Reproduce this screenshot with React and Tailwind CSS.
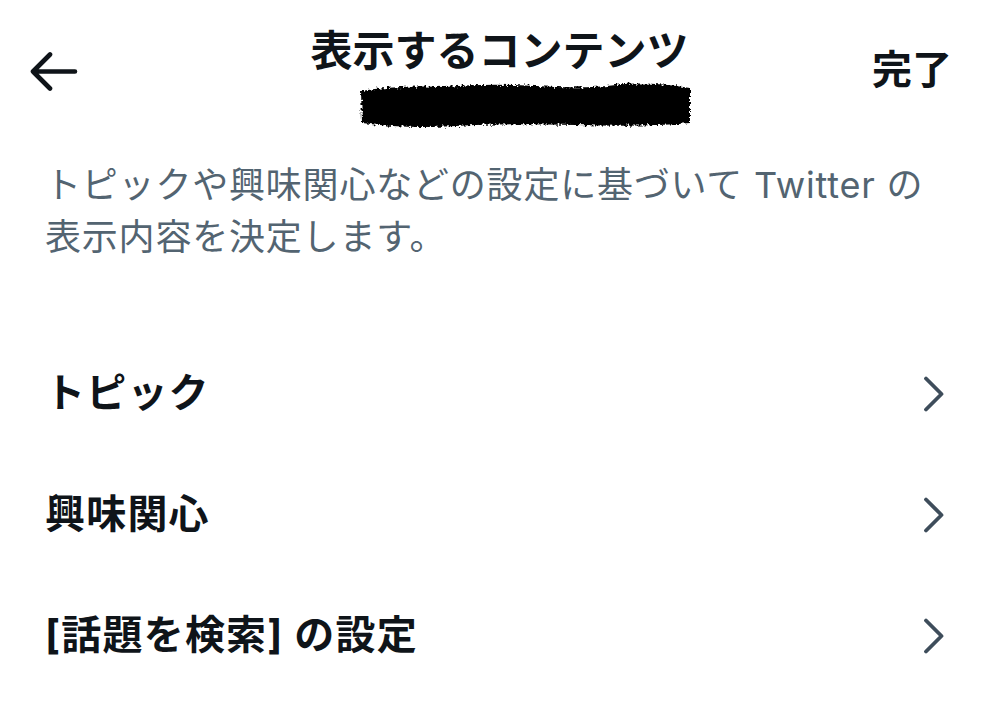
import React from "react";

const FONT = "font-['Inter','Noto_Sans_CJK_JP',sans-serif]";

function BackArrow() {
  return (
    <svg width="48" height="40" viewBox="0 0 48 40" fill="none">
      <path
        d="M3 19.5H45M3 19.5L20 2.5M3 19.5L20 36.5"
        stroke="#0f1419"
        strokeWidth="4.6"
        strokeLinecap="round"
        strokeLinejoin="round"
      />
    </svg>
  );
}

function Chevron() {
  return (
    <svg width="22" height="36" viewBox="0 0 22 36" fill="none">
      <path
        d="M3 2.5L18.5 18L3 33.5"
        stroke="#3e4d5b"
        strokeWidth="3.8"
        strokeLinecap="round"
        strokeLinejoin="round"
      />
    </svg>
  );
}

// scribbled-out username
function Redacted() {
  return (
    <svg width="340" height="56" viewBox="0 0 340 56">
      <defs>
        <filter id="rough" x="-5%" y="-20%" width="110%" height="140%">
          <feTurbulence type="fractalNoise" baseFrequency="0.35" numOctaves="3" seed="4" />
          <feDisplacementMap in="SourceGraphic" scale="6" />
        </filter>
      </defs>
      <path
        d="M5 14 Q40 8 90 10 Q130 6 180 9 T260 8 T334 11 L334 46 Q290 50 220 48 T100 49 T6 46 Z"
        fill="#000"
        filter="url(#rough)"
      />
    </svg>
  );
}

const items = ["トピック", "興味関心", "[話題を検索] の設定"];

export default function App() {
  return (
    <div className={`w-[999px] h-[725px] bg-white overflow-hidden ${FONT}`}>
      {/* Header */}
      <div className="grid grid-cols-[1fr_auto_1fr] items-start">
        <div className="mt-[52px] ml-[30px]">
          <BackArrow />
        </div>

        <div className="flex flex-col pt-[27px]">
          <h1 className="text-[42px] leading-[48px] font-bold text-[#0f1419] text-center">
            表示するコンテンツ
          </h1>
          <div className="h-[58px] mt-[2px] ml-[46px] -mr-[12px]">
            <Redacted />
          </div>
        </div>

        <div className="flex justify-end mt-[46px] pr-[47px]">
          <span className="text-[40px] leading-[48px] font-bold text-[#0f1419]">完了</span>
        </div>
      </div>

      {/* Description */}
      <p className="mt-[24px] px-[45px] text-[36px] leading-[52px] tracking-[0.8px] text-[#536471]">
        トピックや興味関心などの設定に基づいて Twitter の
        <br />
        表示内容を決定します。
      </p>

      {/* List */}
      <div className="mt-[69px] flex flex-col">
        {items.map((label) => (
          <div key={label} className="h-[121px] flex items-center justify-between pl-[45px] pr-[54px]">
            <span className="text-[40px] leading-[48px] font-bold tracking-[1.2px] text-[#0f1419]">
              {label}
            </span>
            <span className="mt-[2px]">
              <Chevron />
            </span>
          </div>
        ))}
      </div>
    </div>
  );
}
